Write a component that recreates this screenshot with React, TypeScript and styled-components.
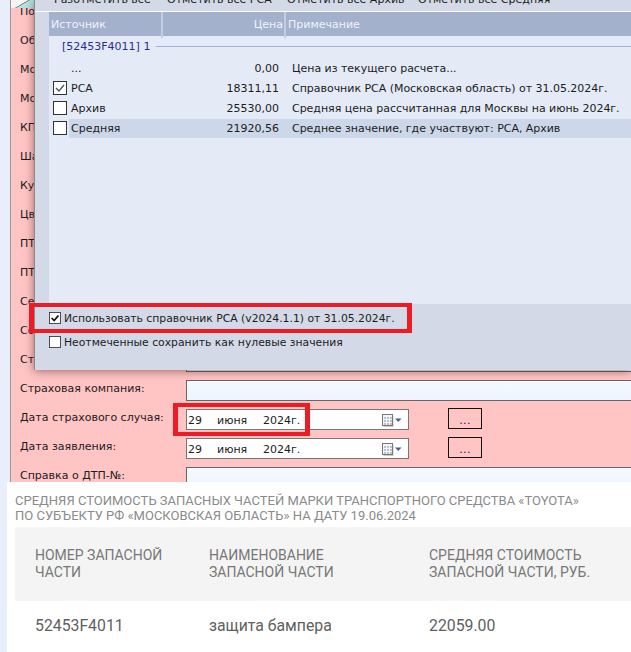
import React from 'react';
import styled, { createGlobalStyle } from 'styled-components';

const UI_FONT = '"DejaVu Sans", sans-serif';

const GlobalStyle = createGlobalStyle`
  html, body {
    margin: 0;
    padding: 0;
    background: #e8eefa;
    overflow: hidden;
  }
`;

const Page = styled.div`
  width: 631px;
  height: 652px;
  padding-left: 7px;
  box-sizing: border-box;
  overflow: hidden;
`;

const Desktop = styled.div`
  position: relative;
  height: 482px;
  padding-left: 3px;
  overflow: hidden;
  font-family: ${UI_FONT};
  font-size: 11px;
  color: #1c1c1c;
`;

const FormPanel = styled.div`
  height: 482px;
  padding: 3px 0 0 9px;
  box-sizing: border-box;
  background: #ffc4c4;
  border-left: 1px solid #999;
`;

const FormRow = styled.div`
  display: grid;
  grid-template-columns: 166px 1fr;
  height: 29px;
`;

const RowLabel = styled.div<{ $covered?: boolean }>`
  width: ${({ $covered }) => ($covered ? '15px' : 'auto')};
  overflow: hidden;
  line-height: 18px;
  white-space: nowrap;
`;

const TextField = styled.div`
  width: 470px;
  height: 21px;
  box-sizing: border-box;
  border: 1px solid #666;
  border-right: none;
  background: linear-gradient(#f5f9ff, #edf5ff);
`;

const DateCell = styled.div`
  display: flex;
  align-items: flex-start;
`;

const DateField = styled.div`
  display: flex;
  align-items: center;
  width: 223px;
  height: 21px;
  padding: 2px 6px 0 1px;
  box-sizing: border-box;
  border: 1px solid #777;
  background: #fff;
`;

const DatePart = styled.span<{ $width: number }>`
  width: ${({ $width }) => $width}px;
  font-size: 11px;
  white-space: nowrap;
`;

const DateSpacer = styled.span`
  flex: 1;
`;

const DotsButton = styled.div`
  display: flex;
  align-items: center;
  justify-content: center;
  width: 34px;
  height: 21px;
  margin: -1px 0 0 39px;
  padding-top: 3px;
  box-sizing: border-box;
  border: 1px solid #111;
  color: #14145e;
  font-size: 11px;
  letter-spacing: 0.4px;
`;

const TabCorner = styled.div`
  position: absolute;
  top: 0;
  left: 4px;
  width: 24px;
  height: 8px;
  background: linear-gradient(150deg, #f4f4f4 45%, #888 47%, #888 50%, #b4e4e4 52%);
`;

const Dialog = styled.div`
  position: absolute;
  top: 0;
  left: 27px;
  right: 0;
  height: 370px;
  display: flex;
  flex-direction: column;
  background: #d3d9e7;
  border-left: 1px solid #8a8a8a;
  box-shadow: 0 1px 9px rgba(70, 30, 30, 0.55);
`;

const Toolbar = styled.div`
  display: flex;
  align-items: flex-end;
  height: 11px;
  padding: 0 0 5px 19px;
  overflow: hidden;
  flex: none;
  border-bottom: 1px solid #fff;
  box-sizing: content-box;
  margin-top: -5px;
`;

const ToolItem = styled.span<{ $width: number }>`
  flex: none;
  width: ${({ $width }) => $width}px;
  line-height: 13px;
  white-space: nowrap;
`;

const ListArea = styled.div`
  flex: 1;
  margin-left: 14px;
  background: #e4ebf7;
`;

const HeaderRow = styled.div`
  display: grid;
  grid-template-columns: 114px 123px 1fr;
  height: 24px;
  background: #a3b1cc;
  color: #f0f3f9;
`;

const HeaderCell = styled.div<{ $right?: boolean }>`
  padding: 0 ${({ $right }) => ($right ? '1px' : '2px')} 0 ${({ $right }) => ($right ? '0' : '2px')};
  line-height: 26px;
  text-align: ${({ $right }) => ($right ? 'right' : 'left')};
  border-right: 2px solid #c3cde0;
  &:last-child {
    border-right: none;
  }
`;

const GroupRow = styled.div`
  display: flex;
  align-items: center;
  height: 20px;
  padding-left: 13px;
  margin-bottom: 2px;
  color: #2b2b96;
`;

const GroupRule = styled.div`
  flex: 1;
  height: 1px;
  margin-left: 6px;
  background: #9fb3d9;
`;

const SourceRow = styled.div`
  display: flex;
  align-items: center;
  height: 20px;
  padding-left: 4px;
`;

const CheckSlot = styled.div`
  flex: none;
  width: 16px;
  height: 14px;
`;

const SourceBody = styled.div<{ $selected?: boolean }>`
  flex: 1;
  display: grid;
  grid-template-columns: 88px 120px 1fr;
  align-items: center;
  height: 19px;
  padding-left: 2px;
  background: ${({ $selected }) => ($selected ? '#ccd8ea' : 'transparent')};
  white-space: nowrap;
`;

const Price = styled.div`
  text-align: right;
`;

const Note = styled.div`
  padding-left: 13px;
  letter-spacing: -0.03px;
`;

const BottomPanel = styled.div`
  flex: none;
  height: 66px;
  padding: 2px 0 0 14px;
  box-sizing: border-box;
  background: #d3d9e7;
`;

const OptionRow = styled.div`
  display: flex;
  align-items: center;
  gap: 3px;
  height: 24px;
  font-size: 10.8px;
  white-space: nowrap;
`;

const RedFrame = styled.div<{ $x: number; $y: number; $w: number; $h: number }>`
  position: absolute;
  left: ${({ $x }) => $x}px;
  top: ${({ $y }) => $y}px;
  width: ${({ $w }) => $w}px;
  height: ${({ $h }) => $h}px;
  box-sizing: border-box;
  border: 5px solid #ed1c24;
  border-width: 4px 5px;
`;

const Report = styled.div`
  height: 170px;
  padding: 11px 0 0 8px;
  box-sizing: border-box;
  background: #fff;
  font-family: Roboto, sans-serif;
`;

const ReportTitle = styled.div`
  font-size: 13px;
  line-height: 15px;
  color: #8a8a8a;
  white-space: nowrap;
`;

const ReportTable = styled.div`
  margin-top: 4px;
`;

const TableHead = styled.div`
  display: grid;
  grid-template-columns: 174px 220px 1fr;
  align-items: center;
  height: 74px;
  padding-left: 20px;
  background: #f4f4f4;
  font-size: 14px;
  line-height: 17px;
  color: #777;
`;

const TableRow = styled.div`
  display: grid;
  grid-template-columns: 174px 220px 1fr;
  align-items: center;
  height: 49px;
  padding-left: 20px;
  font-size: 15.8px;
  color: #5f5f5f;
`;

function CheckBox({ checked, small }: { checked?: boolean; small?: boolean }) {
  const size = small ? 12 : 14;
  return (
    <svg width={size} height={size} viewBox="0 0 14 14" style={{ display: 'block', flex: 'none' }}>
      <rect x="0.5" y="0.5" width="13" height="13" fill="#fff" stroke="#333" />
      {checked && <path d="M3 7l3 3 5-6" fill="none" stroke={small ? '#111' : '#555'} strokeWidth={small ? 2 : 1.4} />}
    </svg>
  );
}

function CalendarIcon() {
  const cells = [2, 5, 8].flatMap((x) => [3, 6, 9].map((y) => ({ x, y })));
  return (
    <svg width="20" height="13" viewBox="0 0 20 13" style={{ display: 'block', flex: 'none' }}>
      <rect x="1.5" y="2" width="10" height="11" fill="#cfccc8" />
      <rect x="0.5" y="0.5" width="10" height="11" fill="#f4f5f7" stroke="#7b7671" />
      {cells.map((cell) => (
        <rect key={`${cell.x}-${cell.y}`} x={cell.x} y={cell.y} width="2" height="2" fill="#bcc2cf" />
      ))}
      <path d="M13 4.5h6.5l-3.2 3.5z" fill="#4a5f86" />
    </svg>
  );
}

const formLabels = [
  'По',
  'Об',
  'Мо',
  'Мо',
  'КП',
  'Ша',
  'Ку',
  'Цв',
  'ПТ',
  'ПТ',
  'Се',
  'Со',
  'Ст',
];

const sources = [
  { name: '...', price: '0,00', note: 'Цена из текущего расчета...', hideCheck: true },
  { name: 'РСА', price: '18311,11', note: 'Справочник РСА (Московская область) от 31.05.2024г.', checked: true },
  { name: 'Архив', price: '25530,00', note: 'Средняя цена рассчитанная для Москвы на июнь 2024г.' },
  { name: 'Средняя', price: '21920,56', note: 'Среднее значение, где участвуют: РСА, Архив', selected: true },
];

function DateRow({ label }: { label: string }) {
  return (
    <FormRow>
      <RowLabel>{label}</RowLabel>
      <DateCell>
        <DateField>
          <DatePart $width={29}>29</DatePart>
          <DatePart $width={46}>июня</DatePart>
          <DatePart $width={50}>2024г.</DatePart>
          <DateSpacer />
          <CalendarIcon />
        </DateField>
        <DotsButton>...</DotsButton>
      </DateCell>
    </FormRow>
  );
}

export default function App() {
  return (
    <Page>
      <GlobalStyle />
      <Desktop>
        <FormPanel>
          {formLabels.map((label, index) => (
            <FormRow key={index}>
              <RowLabel $covered>{label}</RowLabel>
              <TextField />
            </FormRow>
          ))}
          <FormRow>
            <RowLabel>Страховая компания:</RowLabel>
            <TextField />
          </FormRow>
          <DateRow label="Дата страхового случая:" />
          <DateRow label="Дата заявления:" />
          <FormRow>
            <RowLabel>Справка о ДТП-№:</RowLabel>
            <TextField />
          </FormRow>
        </FormPanel>
        <TabCorner />
        <Dialog>
          <Toolbar>
            <ToolItem $width={113}>Разотметить все</ToolItem>
            <ToolItem $width={120}>Отметить все РСА</ToolItem>
            <ToolItem $width={131}>Отметить все Архив</ToolItem>
            <ToolItem $width={150}>Отметить все Средняя</ToolItem>
          </Toolbar>
          <ListArea>
            <HeaderRow>
              <HeaderCell>Источник</HeaderCell>
              <HeaderCell $right>Цена</HeaderCell>
              <HeaderCell>Примечание</HeaderCell>
            </HeaderRow>
            <GroupRow>
              [52453F4011] 1
              <GroupRule />
            </GroupRow>
            {sources.map((source) => (
              <SourceRow key={source.name}>
                <CheckSlot>{!source.hideCheck && <CheckBox checked={source.checked} />}</CheckSlot>
                <SourceBody $selected={source.selected}>
                  <div>{source.name}</div>
                  <Price>{source.price}</Price>
                  <Note>{source.note}</Note>
                </SourceBody>
              </SourceRow>
            ))}
          </ListArea>
          <BottomPanel>
            <OptionRow>
              <CheckBox checked small />
              Использовать справочник РСА (v2024.1.1) от 31.05.2024г.
            </OptionRow>
            <OptionRow>
              <CheckBox small />
              Неотмеченные сохранить как нулевые значения
            </OptionRow>
          </BottomPanel>
        </Dialog>
        <RedFrame $x={22} $y={303} $w={383} $h={30} />
        <RedFrame $x={166} $y={403} $w={137} $h={33} />
      </Desktop>
      <Report>
        <ReportTitle>
          СРЕДНЯЯ СТОИМОСТЬ ЗАПАСНЫХ ЧАСТЕЙ МАРКИ ТРАНСПОРТНОГО СРЕДСТВА «TOYOTA»
          <br />
          ПО СУБЪЕКТУ РФ «МОСКОВСКАЯ ОБЛАСТЬ» НА ДАТУ 19.06.2024
        </ReportTitle>
        <ReportTable>
          <TableHead>
            <div>
              НОМЕР ЗАПАСНОЙ
              <br />
              ЧАСТИ
            </div>
            <div>
              НАИМЕНОВАНИЕ
              <br />
              ЗАПАСНОЙ ЧАСТИ
            </div>
            <div>
              СРЕДНЯЯ СТОИМОСТЬ
              <br />
              ЗАПАСНОЙ ЧАСТИ, РУБ.
            </div>
          </TableHead>
          <TableRow>
            <div>52453F4011</div>
            <div>защита бампера</div>
            <div>22059.00</div>
          </TableRow>
        </ReportTable>
      </Report>
    </Page>
  );
}
